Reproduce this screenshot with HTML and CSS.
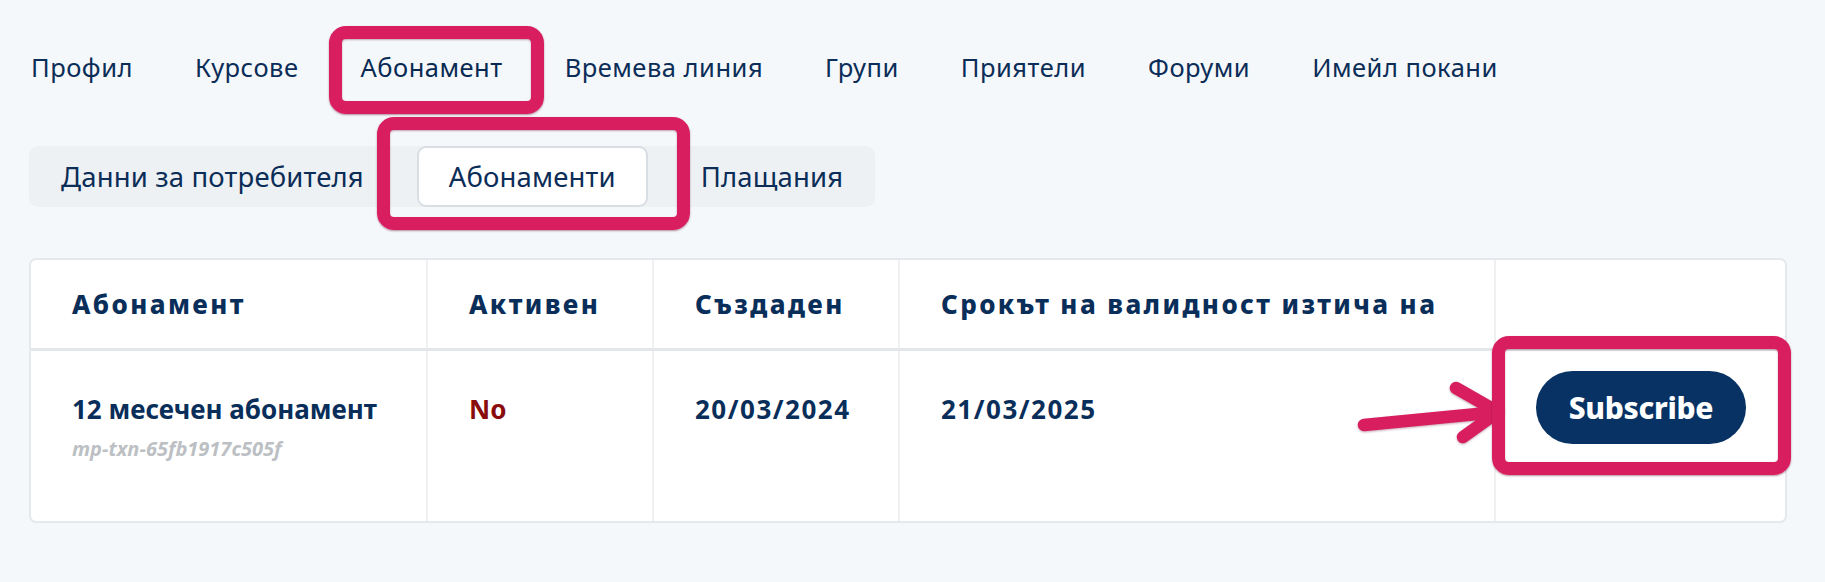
FILE: index.html
```html
<!DOCTYPE html>
<html lang="bg">
<head>
<meta charset="utf-8">
<title>Абонамент</title>
<link rel="stylesheet" href="styles.css">
</head>
<body>
<div class="page">
  <nav class="nav">
    <a class="nav-item">Профил</a>
    <a class="nav-item">Курсове</a>
    <a class="nav-item nav-active">Абонамент<span class="mark mark-nav"></span></a>
    <a class="nav-item">Времева линия</a>
    <a class="nav-item">Групи</a>
    <a class="nav-item">Приятели</a>
    <a class="nav-item">Форуми</a>
    <a class="nav-item">Имейл покани</a>
  </nav>

  <div class="subtabs">
    <a class="subtab">Данни за потребителя</a>
    <a class="subtab subtab-active">Абонаменти<span class="mark mark-sub"></span></a>
    <a class="subtab">Плащания</a>
  </div>

  <div class="card">
    <table class="subs">
      <colgroup>
        <col class="c1"><col class="c2"><col class="c3"><col class="c4"><col class="c5">
      </colgroup>
      <thead>
        <tr>
          <th>Абонамент</th>
          <th>Активен</th>
          <th>Създаден</th>
          <th>Срокът на валидност изтича на</th>
          <th></th>
        </tr>
      </thead>
      <tbody>
        <tr>
          <td>
            <div class="plan">12 месечен абонамент</div>
            <div class="txn">mp-txn-65fb1917c505f</div>
          </td>
          <td><span class="inactive">No</span></td>
          <td class="date">20/03/2024</td>
          <td class="date">21/03/2025</td>
          <td class="action">
            <span class="btn-wrap">
              <svg class="arrow" width="160" height="70" viewBox="0 0 160 70">
                <path d="M14 46 L148 33 M106 9 L148 33 L113 58" fill="none" stroke="#d81e5f" stroke-width="12.5" stroke-linecap="round" stroke-linejoin="round"/>
              </svg>
              <button class="btn">Subscribe</button>
              <span class="mark mark-btn"></span>
            </span>
          </td>
        </tr>
      </tbody>
    </table>
  </div>
</div>
</body>
</html>
```

FILE: styles.css
```css
* { box-sizing: border-box; }

html, body {
  margin: 0;
  padding: 0;
  background: #f5f8fb;
}

body {
  font-family: "Noto Sans", "Open Sans", sans-serif;
  color: #0b2d57;
}

.page {
  padding: 46px 38px 0 29px;
}

.nav {
  display: flex;
  gap: 62px;
  padding-left: 2px;
  height: 42px;
  align-items: center;
}

.nav-item {
  position: relative;
  font-size: 25.5px;
  letter-spacing: 0.5px;
  line-height: 42px;
  white-space: nowrap;
  color: #0b2d57;
}

.nav-active {
  color: #082a52;
}

.mark {
  position: absolute;
  border: 13px solid #d81e5f;
  border-radius: 17px;
  box-shadow: 0 1px 2px rgba(90, 10, 40, 0.45), inset 0 1px 2px rgba(90, 10, 40, 0.35);
  pointer-events: none;
}

.mark-nav {
  left: -32px;
  right: -41px;
  top: -20px;
  bottom: -26px;
}

.subtabs {
  margin-top: 58px;
  display: inline-flex;
  gap: 21px;
  background: #eef1f4;
  border-radius: 9px;
  height: 61px;
}

.subtab {
  position: relative;
  display: flex;
  align-items: center;
  padding: 0 32px;
  font-size: 27.5px;
  letter-spacing: 0.15px;
  white-space: nowrap;
  color: #0b2d57;
}

.subtab-active {
  background: #ffffff;
  border: 2px solid #d9dee4;
  border-radius: 9px;
  padding: 0 30px;
}

.mark-sub {
  left: -42px;
  right: -44px;
  top: -31px;
  bottom: -25px;
}

.card {
  margin-top: 51px;
  background: #ffffff;
  border: 2px solid #e5e8ec;
  border-radius: 7px;
}

.subs {
  width: 100%;
  table-layout: fixed;
  border-collapse: collapse;
}

.c1 { width: 396px; }
.c2 { width: 226px; }
.c3 { width: 246px; }
.c4 { width: 596px; }

.subs th {
  height: 89px;
  text-align: left;
  padding: 0 0 0 41px;
  font-size: 26px;
  font-weight: 800;
  letter-spacing: 2.4px;
  color: #0a2e5a;
  border-bottom: 3px solid #e3e6ea;
  border-left: 2px solid #eef0f2;
  vertical-align: middle;
  white-space: nowrap;
}

.subs th:first-child,
.subs td:first-child {
  border-left: none;
}

.subs td {
  height: 172px;
  padding: 41px 0 0 41px;
  vertical-align: top;
  font-size: 26px;
  font-weight: 700;
  line-height: 34px;
  color: #0a2e5a;
  border-left: 2px solid #eef0f2;
  white-space: nowrap;
}

.subs td.date {
  letter-spacing: 1.5px;
}

.plan {
  line-height: 34px;
}

.txn {
  margin-top: 10px;
  font-size: 20px;
  font-style: italic;
  font-weight: 700;
  color: #bcbfc3;
  line-height: 26px;
}

.inactive {
  color: #8a0b0b;
  line-height: 34px;
}

.subs td.action {
  padding: 20px 0 0 40px;
}

.btn-wrap {
  position: relative;
  display: inline-block;
}

.btn {
  display: block;
  width: 210px;
  height: 73px;
  border: none;
  border-radius: 37px;
  background: #073263;
  color: #ffffff;
  font-family: "Noto Sans", sans-serif;
  font-size: 30px;
  font-weight: 800;
  letter-spacing: -0.3px;
  cursor: pointer;
}

.mark-btn {
  left: -44px;
  right: -45px;
  top: -35px;
  bottom: -31px;
}

.arrow {
  position: absolute;
  left: -186px;
  top: 8px;
  overflow: visible;
  filter: drop-shadow(0 1px 1px rgba(90, 10, 40, 0.35));
}
```
